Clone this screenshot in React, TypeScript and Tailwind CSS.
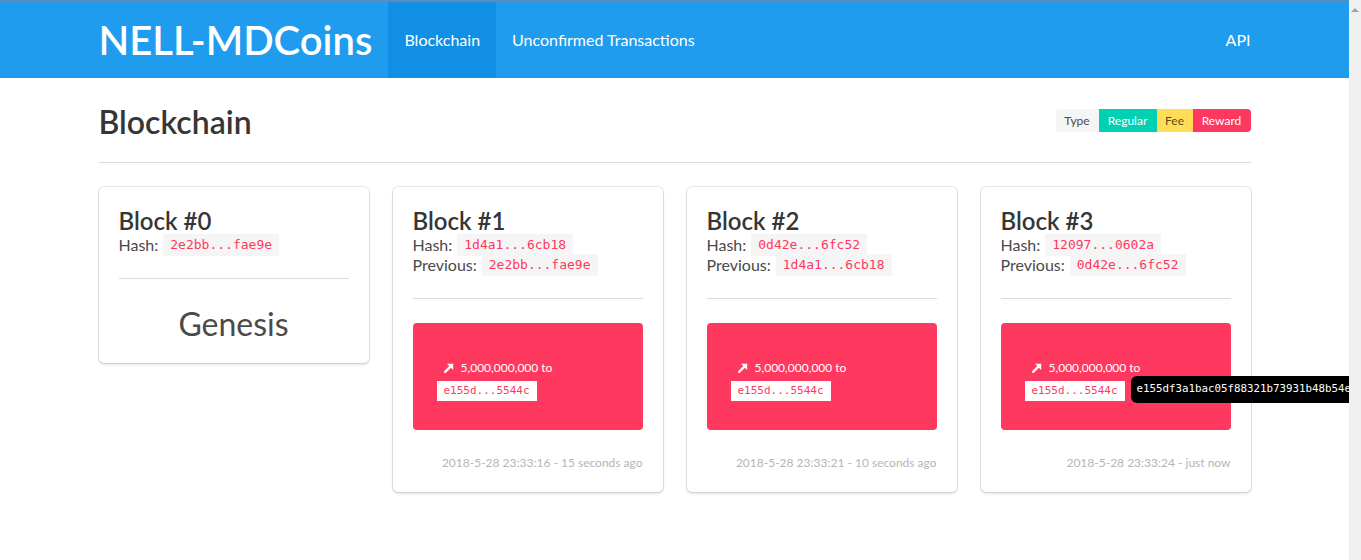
const sans = "font-['Lato','Open_Sans',sans-serif]";
const mono = "font-['DejaVu_Sans_Mono','Liberation_Mono',monospace]";

type Block = {
  n: number;
  hash: string;
  prev?: string;
  time?: string;
  tooltip?: string;
};

const blocks: Block[] = [
  { n: 0, hash: "2e2bb...fae9e" },
  { n: 1, hash: "1d4a1...6cb18", prev: "2e2bb...fae9e", time: "2018-5-28 23:33:16 - 15 seconds ago" },
  { n: 2, hash: "0d42e...6fc52", prev: "1d4a1...6cb18", time: "2018-5-28 23:33:21 - 10 seconds ago" },
  {
    n: 3,
    hash: "12097...0602a",
    prev: "0d42e...6fc52",
    time: "2018-5-28 23:33:24 - just now",
    tooltip: "e155df3a1bac05f88321b73931b48b54e",
  },
];

const Arrow = () => (
  <svg viewBox="0 0 10 10" className="size-[10px]" fill="#fff">
    <path d="M1.2 8.8 L6.8 3.2" stroke="#fff" strokeWidth="2.4" strokeLinecap="square" />
    <path d="M3 0.8 H9.2 V7 Z" />
  </svg>
);

const Code = ({ children }: { children: string }) => (
  <code className={`${mono} text-[13px] leading-[20px] bg-[#f5f5f5] text-[#ff3860] px-[7px] py-[1px]`}>
    {children}
  </code>
);

const Card = ({ b }: { b: Block }) => (
  <div className="w-[270px] bg-white rounded-[5px] shadow-[0_2px_3px_rgba(10,10,10,0.1),0_0_0_1px_rgba(10,10,10,0.1)] p-5">
    <h3 className="text-[24px] leading-[28px] font-semibold text-[#363636]">Block #{b.n}</h3>
    <div className="h-[20px] flex items-center gap-[5px] text-[16px] text-[#4a4a4a]">
      <span>Hash:</span>
      <Code>{b.hash}</Code>
    </div>
    {b.prev && (
      <div className="h-[20px] flex items-center gap-[5px] text-[16px] text-[#4a4a4a]">
        <span>Previous:</span>
        <Code>{b.prev}</Code>
      </div>
    )}
    <div className="h-px bg-[#dbdbdb] mt-[23px]" />
    {b.n === 0 ? (
      <div className="mt-[26px] text-center text-[32px] leading-[38px] text-[#4a4a4a]">Genesis</div>
    ) : (
      <>
        <div className="mt-6 h-[107px] rounded-[4px] bg-[#ff3860] pt-[37px] pl-6">
          <div className="flex items-center gap-[7px] pl-[7px] h-4 text-[12px] text-white">
            <Arrow />
            <span>5,000,000,000 to</span>
          </div>
          <div className="relative inline-block mt-[3px]">
            <code className={`${mono} block bg-white text-[#ff3860] text-[11px] leading-[20px] px-[7px]`}>
              e155d...5544c
            </code>
            {b.tooltip && (
              <div
                className={`${mono} absolute left-[calc(100%+6px)] top-[-5px] h-[27px] flex items-center rounded-[6px] bg-black text-white text-[10.8px] pl-[6px] pr-[4px] whitespace-nowrap`}
              >
                {b.tooltip}
              </div>
            )}
          </div>
        </div>
        <div className="mt-6 h-[18px] leading-[18px] text-right text-[12px] text-[#b5b5b5]">{b.time}</div>
      </>
    )}
  </div>
);

export default function App() {
  return (
    <div className={`${sans} flex w-[1361px] h-[560px] bg-white`}>
      <main className="w-[1349px] h-[560px] overflow-hidden">
        <nav className="h-[78px] bg-[#209cee]">
          <div className="h-[2px] bg-[#5c8cb8]" />
          <div className="mx-auto w-[1152px] h-[76px] flex items-stretch text-white">
            <div className="flex items-center text-[40px] font-semibold mr-4">NELL-MDCoins</div>
            <div className="flex items-center px-4 bg-[#118fe4] text-[16px]">Blockchain</div>
            <div className="flex items-center px-4 text-[16px]">Unconfirmed Transactions</div>
            <div className="ml-auto flex items-center text-[16px]">API</div>
          </div>
        </nav>
        <div className="mx-auto w-[1152px]">
          <div className="mt-[24px] h-[40px] flex items-center justify-between">
            <h1 className="text-[32px] leading-[40px] font-semibold text-[#363636]">Blockchain</h1>
            <div className="flex h-[23px] text-[12px] rounded-[4px] overflow-hidden -mt-[3px]">
              <span className="w-[43px] flex items-center justify-center bg-[#f5f5f5] text-[#4a4a4a]">Type</span>
              <span className="w-[58px] flex items-center justify-center bg-[#00d1b2] text-white">Regular</span>
              <span className="w-[36px] flex items-center justify-center bg-[#ffdd57] text-black/70">Fee</span>
              <span className="w-[58px] flex items-center justify-center bg-[#ff3860] text-white">Reward</span>
            </div>
          </div>
          <div className="h-px bg-[#dbdbdb] mt-[20px]" />
          <div className="mt-6 flex items-start gap-6">
            {blocks.map((b) => (
              <Card key={b.n} b={b} />
            ))}
          </div>
        </div>
      </main>
      <div className="w-[12px] h-[560px] bg-[#f0f0f0] flex justify-center pt-[8px]">
        <div className="w-0 h-0 border-x-[4px] border-x-transparent border-b-[4px] border-b-[#a3a3a3]" />
      </div>
    </div>
  );
}
